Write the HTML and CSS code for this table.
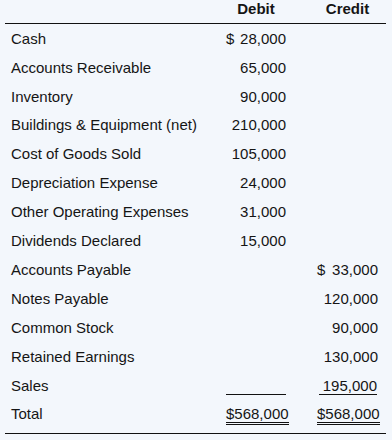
FILE: index.html
```html
<!DOCTYPE html>
<html>
<head>
<meta charset="utf-8">
<link rel="stylesheet" href="styles.css">
</head>
<body>
<div class="sheet">
  <div class="head">
    <span></span>
    <span class="hcell">Debit</span>
    <span></span>
    <span class="hcell">Credit</span>
    <span></span>
  </div>
  <div class="body">
    <div class="row"><span class="label">Cash</span><span class="amt split"><span>$</span><span>28,000</span></span><span></span><span class="amt"></span><span></span></div>
    <div class="row"><span class="label">Accounts Receivable</span><span class="amt">65,000</span><span></span><span class="amt"></span><span></span></div>
    <div class="row"><span class="label">Inventory</span><span class="amt">90,000</span><span></span><span class="amt"></span><span></span></div>
    <div class="row"><span class="label">Buildings &amp; Equipment (net)</span><span class="amt">210,000</span><span></span><span class="amt"></span><span></span></div>
    <div class="row"><span class="label">Cost of Goods Sold</span><span class="amt">105,000</span><span></span><span class="amt"></span><span></span></div>
    <div class="row"><span class="label">Depreciation Expense</span><span class="amt">24,000</span><span></span><span class="amt"></span><span></span></div>
    <div class="row"><span class="label">Other Operating Expenses</span><span class="amt">31,000</span><span></span><span class="amt"></span><span></span></div>
    <div class="row"><span class="label">Dividends Declared</span><span class="amt">15,000</span><span></span><span class="amt"></span><span></span></div>
    <div class="row"><span class="label">Accounts Payable</span><span class="amt"></span><span></span><span class="amt split"><span>$</span><span>33,000</span></span><span></span></div>
    <div class="row"><span class="label">Notes Payable</span><span class="amt"></span><span></span><span class="amt">120,000</span><span></span></div>
    <div class="row"><span class="label">Common Stock</span><span class="amt"></span><span></span><span class="amt">90,000</span><span></span></div>
    <div class="row"><span class="label">Retained Earnings</span><span class="amt"></span><span></span><span class="amt">130,000</span><span></span></div>
    <div class="row"><span class="label">Sales</span><span class="amt"><span class="rule full">&nbsp;</span></span><span></span><span class="amt"><span class="rule part">195,000</span></span><span></span></div>
    <div class="row"><span class="label">Total</span><span class="amt"><span class="dbl">$568,000</span></span><span></span><span class="amt"><span class="dbl">$568,000</span></span><span></span></div>
  </div>
</div>
</body>
</html>
```
FILE: styles.css
```css
html, body {
  margin: 0;
  padding: 0;
  background: #f3f7fc;
}

body {
  font-family: "Liberation Sans", Arial, sans-serif;
  font-size: 15px;
  color: #151515;
}

.sheet {
  margin-left: 5px;
  width: 381px;
}

.head,
.row {
  display: grid;
  grid-template-columns: 221px 60px 31px 61px 8px;
}

.head {
  height: 24px;
  padding-top: 0.5px;
  line-height: 16px;
  border-bottom: 1px solid #111;
  box-sizing: border-box;
}

.hcell {
  font-weight: bold;
  text-align: center;
}

.body {
  padding-top: 0.7px;
  padding-bottom: 4px;
  border-bottom: 1px solid #111;
}

.row {
  height: 28.92px;
  line-height: 28.92px;
}

.label {
  padding-left: 6px;
  white-space: nowrap;
}

.amt {
  text-align: right;
  white-space: nowrap;
  direction: ltr;
}

.split {
  display: flex;
  justify-content: space-between;
}

.rule,
.dbl {
  display: inline-block;
  line-height: 16px;
  vertical-align: baseline;
}

.rule {
  border-bottom: 1px solid #111;
}

.rule.full {
  width: 60px;
}

.rule.part {
  width: 58px;
  margin-right: 1px;
  text-align: right;
}

.dbl {
  border-bottom: 3px double #111;
}
```
